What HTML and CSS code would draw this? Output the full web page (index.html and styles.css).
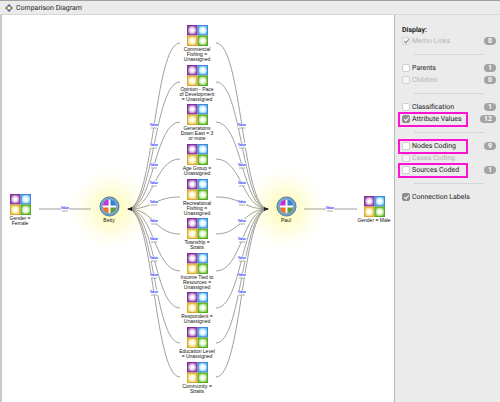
FILE: index.html
```html
<!DOCTYPE html>
<html lang="en">
<head>
    <meta charset="UTF-8">
    <meta name="viewport" content="width=device-width, initial-scale=1.0">
    <title>Comparison Diagram</title>
    <link rel="stylesheet" href="styles.css">
</head>
<body>
    <header class="titlebar">
        <svg class="title-icon" viewBox="0 0 16 16" aria-hidden="true">
            <circle cx="8" cy="8" r="4" fill="#fff" stroke="#777" stroke-width="2"/>
            <path d="M4 4 8 0l4 4zM4 12l4 4 4-4z" fill="#2f6cb5"/>
            <path d="M4 4 0 8l4 4zM12 4l4 4-4 4z" fill="#8b7a35"/>
        </svg>
        <h1>Comparison Diagram</h1>
    </header>
    <main>
        <section class="canvas">
            <svg id="diagram" width="390" height="384" viewBox="2 15 390 384" role="img" aria-label="Comparison of Betty and Paul">
                <defs>
                    <radialGradient id="glow">
                        <stop offset="0.2" stop-color="#fdfcc4"/>
                        <stop offset="0.5" stop-color="#fefde0"/>
                        <stop offset="1" stop-color="#fffffa" stop-opacity="0"/>
                    </radialGradient>
                    <radialGradient id="purple"><stop offset="0.2" stop-color="#fff"/><stop offset="0.6" stop-color="#dfc4e6"/><stop offset="1" stop-color="#9c4fb3"/></radialGradient>
                    <radialGradient id="blue"><stop offset="0.2" stop-color="#fff"/><stop offset="0.6" stop-color="#d3f0fc"/><stop offset="1" stop-color="#5fb8f0"/></radialGradient>
                    <radialGradient id="yellow"><stop offset="0.2" stop-color="#fff"/><stop offset="0.6" stop-color="#fbf2c4"/><stop offset="1" stop-color="#e9ca50"/></radialGradient>
                    <radialGradient id="green"><stop offset="0.2" stop-color="#fff"/><stop offset="0.6" stop-color="#ddf3c5"/><stop offset="1" stop-color="#78c842"/></radialGradient>
                    <symbol id="attribute" viewBox="0 0 42 42">
                        <rect x="1" y="1" width="19" height="19" fill="url(#purple)" stroke="#7b2d93" stroke-width="2"/>
                        <rect x="22" y="1" width="19" height="19" fill="url(#blue)" stroke="#3f86d8" stroke-width="2"/>
                        <rect x="1" y="22" width="19" height="19" fill="url(#yellow)" stroke="#dba636" stroke-width="2"/>
                        <rect x="22" y="22" width="19" height="19" fill="url(#green)" stroke="#56a62a" stroke-width="2"/>
                    </symbol>
                    <symbol id="case" viewBox="0 0 44 44">
                        <circle cx="22" cy="22" r="20" fill="#6ba9dc" stroke="#5c7389" stroke-width="2"/>
                        <circle cx="22" cy="22" r="15" fill="#fff" stroke="#3f658c" stroke-width="1"/>
                        <path d="M20 20H8A14 14 0 0 1 20 8z" fill="#c62fd2"/>
                        <path d="M24 20V8a14 14 0 0 1 12 12z" fill="#3381d2"/>
                        <path d="M20 24v12A14 14 0 0 1 8 24z" fill="#ef7225"/>
                        <path d="M24 24h12a14 14 0 0 1-12 12z" fill="#6a9a35"/>
                    </symbol>
                </defs>
                <circle cx="111" cy="209" r="44" fill="url(#glow)"/>
                <circle cx="285" cy="209" r="44" fill="url(#glow)"/>
                <g id="edges"></g>
                <g id="nodes"></g>
            </svg>
        </section>
        <aside class="sidebar">
            <h2>Display:</h2>
            <div class="row off"><label><input type="checkbox" checked disabled>Memo Links</label><span class="badge">0</span></div>
            <hr>
            <div class="row"><label><input type="checkbox">Parents</label><span class="badge">1</span></div>
            <div class="row off"><label><input type="checkbox" disabled>Children</label><span class="badge">0</span></div>
            <hr>
            <div class="row"><label><input type="checkbox">Classification</label><span class="badge">1</span></div>
            <div class="row marked"><label><input type="checkbox" checked>Attribute Values</label><span class="badge">12</span></div>
            <hr>
            <div class="row marked"><label><input type="checkbox">Nodes Coding</label><span class="badge">9</span></div>
            <div class="row off"><label><input type="checkbox" disabled>Cases Coding</label></div>
            <div class="row marked"><label><input type="checkbox">Sources Coded</label><span class="badge">1</span></div>
            <hr>
            <div class="row"><label><input type="checkbox" checked>Connection Labels</label></div>
        </aside>
    </main>
    <script src="diagram.js"></script>
</body>
</html>
```
FILE: diagram.js
```js
const HUB_Y = 209;

// shared attributes: top of the icon, end of the connector, label lines
const shared = [
    { top: 25, end: 43, label: ['Commercial', 'Fishing =', 'Unassigned'] },
    { top: 65, end: 82, label: ['Opinion - Pace', 'of Development', '= Unassigned'] },
    { top: 104, end: 122, label: ['Generations', 'Down East = 3', 'or more'] },
    { top: 144, end: 159, label: ['Age Group =', 'Unassigned'] },
    { top: 179, end: 197, label: ['Recreational', 'Fishing =', 'Unassigned'] },
    { top: 218, end: 234, label: ['Township =', 'Straits'] },
    { top: 253, end: 271, label: ['Income Tied to', 'Resources =', 'Unassigned'] },
    { top: 292, end: 308, label: ['Respondent =', 'Unassigned'] },
    { top: 327, end: 343, label: ['Education Level', '= Unassigned'] },
    { top: 362, end: 377, label: ['Community =', 'Straits'] }
];

let edges = '';
let tags = '';
let nodes = '';

function addNode(icon, x, top, lines) {
    nodes += `<use href="#${icon}" x="${x - 10}" y="${top}" width="21" height="21"/>`;
    lines.forEach((line, i) => {
        nodes += `<text class="node-label" x="${x}" y="${top + 26 + i * 5}">${line}</text>`;
    });
}

function addTag(x, y) {
    tags += `<rect x="${x - 4}" y="${y - 3}" width="8" height="5" fill="#fff"/>
        <text class="edge-label" x="${x}" y="${y}">Value</text>
        <path class="edge-rule" d="M${x - 3} ${y + 2}h6"/>`;
}

function addCurve(hubX, endX, endY) {
    const midX = Math.round((hubX + endX) / 2);
    edges += `<path class="edge" d="M${hubX} ${HUB_Y}C${midX} ${HUB_Y} ${midX} ${endY} ${endX} ${endY}"/>`;
    addTag(midX, Math.round((HUB_Y + endY) / 2));
}

shared.forEach(item => {
    addCurve(128, 180, item.end);
    addCurve(268, 216, item.end);
    addNode('attribute', 197, item.top, item.label);
});

edges += `<path class="edge" d="M39 ${HUB_Y}H91M304 ${HUB_Y}H357"/>`;
edges += `<path class="arrow" d="M127 ${HUB_Y}l5-2v4zM269 ${HUB_Y}l-5-2v4z"/>`;
addTag(65, HUB_Y);
addTag(330, HUB_Y);

addNode('attribute', 20, 194, ['Gender =', 'Female']);
addNode('attribute', 374, 196, ['Gender = Male']);
addNode('case', 109, 196, ['Betty']);
addNode('case', 286, 196, ['Paul']);

document.getElementById('edges').innerHTML = edges + tags;
document.getElementById('nodes').innerHTML = nodes;
```
FILE: styles.css
```css
*,
*::after {
    box-sizing: border-box;
}

body {
    margin: 0;
    min-height: 100vh;
    display: flex;
    flex-direction: column;
    font-family: Roboto, "Liberation Sans", sans-serif;
    font-size: 7px;
    line-height: 12px;
    text-rendering: geometricPrecision;
    color: #1c1c1c;
    background-color: #ebebeb;
}

.titlebar {
    display: flex;
    align-items: center;
    gap: 3px;
    height: 15px;
    padding-left: 5px;
    border-top: 1px solid #a0a0a0;
    border-bottom: 1px solid #d6d6d6;
}

.title-icon {
    width: 8px;
    height: 8px;
}

h1 {
    margin: 0;
    font-size: 7px;
    font-weight: normal;
}

main {
    flex: 1;
    display: flex;
}

.canvas {
    flex: 1;
    min-width: 0;
    overflow: hidden;
    background-color: #fff;
    border-left: 2px solid #c9c9c9;
}

#diagram {
    display: block;
    text-rendering: auto;
}

.edge {
    fill: none;
    stroke: #777;
    stroke-width: 0.7;
}

.arrow {
    fill: #222;
}

.edge-label {
    font-family: "Liberation Sans", sans-serif;
    font-size: 3px;
    font-weight: bold;
    text-anchor: middle;
    fill: #1414ff;
}

.edge-rule {
    stroke: #aaa;
    stroke-width: 1;
}

.node-label {
    font-family: "Liberation Sans", sans-serif;
    font-size: 5px;
    text-anchor: middle;
    fill: #111;
}

/* Sidebar */
.sidebar {
    width: 106px;
    padding: 10px 4px 10px 7px;
    border-left: 1px solid #b8b8b8;
}

h2 {
    margin: 0;
    font-size: 7px;
    line-height: 10px;
    font-weight: bold;
}

.row {
    position: relative;
    display: flex;
    align-items: center;
    justify-content: space-between;
    height: 12px;
}

.row label {
    display: flex;
    align-items: center;
    gap: 2px;
    white-space: nowrap;
}

.off label {
    color: #b4b4b4;
}

input {
    appearance: none;
    position: relative;
    width: 8px;
    height: 8px;
    margin: 0;
    background-color: #fff;
    border: 1px solid #cfcfcf;
    border-radius: 2px;
}

input:checked {
    background-color: #8e8e8e;
    border-color: #8e8e8e;
}

input:disabled {
    background-color: #f4f4f4;
    border-color: #d4d4d4;
}

input:checked::after {
    content: "";
    position: absolute;
    left: 2px;
    top: 0;
    width: 3px;
    height: 5px;
    border: solid #fff;
    border-width: 0 1px 1px 0;
    transform: rotate(40deg);
}

input:disabled::after {
    border-color: #888;
}

.badge {
    min-width: 12px;
    height: 8px;
    padding: 0 4px;
    border-radius: 4px;
    background-color: #a3a3a3;
    color: #fff;
    font-size: 7px;
    font-weight: bold;
    line-height: 8px;
    text-align: center;
}

hr {
    width: 70px;
    height: 1px;
    margin: 7px 12px;
    border: 0;
    background-color: #d4d4d4;
}

/* Highlight frame around an option */
.marked::after {
    content: "";
    position: absolute;
    left: -4px;
    top: -1px;
    width: 70px;
    height: 15px;
    border: 2px solid #fb12d2;
    pointer-events: none;
}
```
